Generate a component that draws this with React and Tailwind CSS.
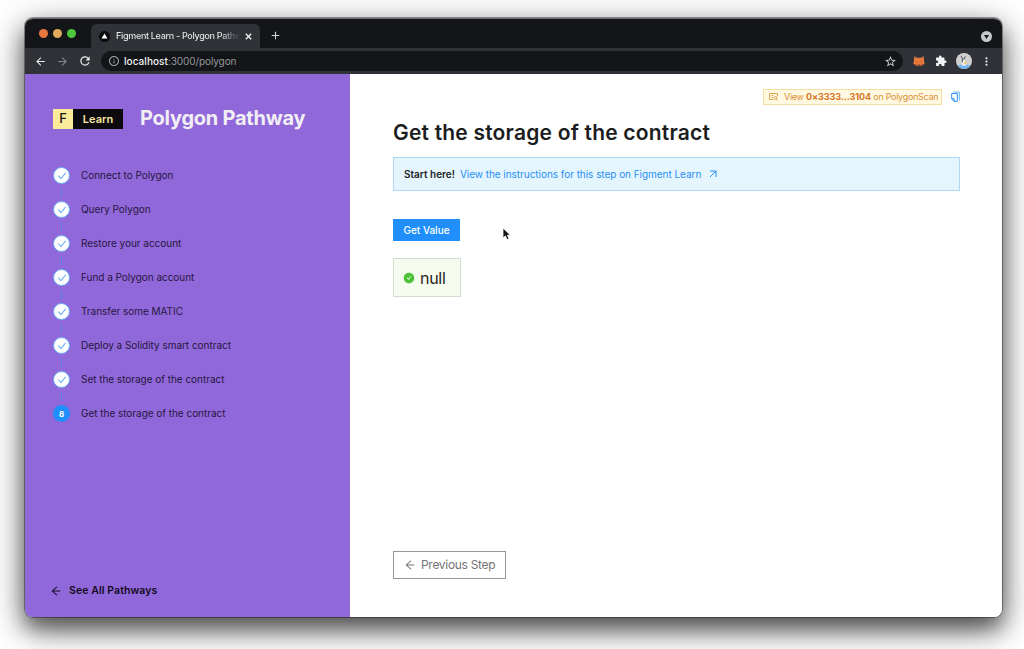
import React from "react";
import { AiOutlineArrowLeft, AiOutlineCheck, AiFillCheckCircle } from "react-icons/ai";
import { MdExtension, MdStarBorder, MdMoreVert, MdRefresh, MdInfoOutline, MdArrowBack, MdArrowForward, MdAdd } from "react-icons/md";

const STEPS = [
  "Connect to Polygon",
  "Query Polygon",
  "Restore your account",
  "Fund a Polygon account",
  "Transfer some MATIC",
  "Deploy a Solidity smart contract",
  "Set the storage of the contract",
  "Get the storage of the contract",
];

function FoxIcon() {
  return (
    <svg width="12" height="12" viewBox="0 0 12 12">
      <path d="M1.200 1.200 4.300 2.700h3.400l3.100-1.500.2 4.300.6 3.300-1 .7H9L8 10.800H4l-1-1.300H1.400l-1-.7L1 5.500Z" fill="#e8783a" />
      <path d="M1 1.100 4.300 2.700 2 3ZM11 1.100 7.700 2.700 10 3Z" fill="#8a6350" />
      <path d="M3.200 6.600l1.300.2v.7ZM8.800 6.600l-1.300.2v.7Z" fill="#6b3b28" />
      <path d="M1.600 9.500h1.600l.7 1.200H2.200ZM10.400 9.500H8.800l-.7 1.200h1.700Z" fill="#a9583a" />
      <path d="M4.900 9.600h2.200l.2.900H4.700Z" fill="#5a3a2e" />
    </svg>
  );
}

function Avatar() {
  return (
    <svg width="16" height="16" viewBox="0 0 16 16">
      <circle cx="8" cy="8" r="8" fill="#d0d1cf" />
      <path d="M1.400 12.500Q8 10.500 14.600 12.500A8 8 0 0 1 1.400 12.500Z" fill="#75b5ee" />
      <path d="M6.300 5.500h2.200l.6 2.500 1.500 2.500-.6 2.200H6.200Z" fill="#eeeeec" />
      <path d="M5 2.800 6.300 5.500 6.500 9M9.300 3.300 8.300 6 6.500 6" fill="none" stroke="#4d5054" strokeWidth="1" />
      <circle cx="9.300" cy="10" r="1.300" fill="#e2c666" />
    </svg>
  );
}

function BrowserTabs() {
  return (
    <div className="flex h-[29px] bg-[#131519] pl-[14px] pr-[10px]">
      <div className="flex h-[29px] w-[52px] items-center gap-[5px]">
        <span className="h-[9px] w-[9px] rounded-full bg-[#e9763e]" />
        <span className="h-[9px] w-[9px] rounded-full bg-[#e0ab5b]" />
        <span className="h-[9px] w-[9px] rounded-full bg-[#4fc63d]" />
      </div>
      <div className="mt-[5px] flex h-6 w-[169px] items-center rounded-t-[6px] bg-[#303238] pl-2 pr-[6px]">
        <svg className="shrink-0" width="11" height="11" viewBox="0 0 11 11">
          <circle cx="5.500" cy="5.500" r="5.500" fill="#090a0c" />
          <path d="m5.500 2.500 3 5h-6Z" fill="#fff" />
        </svg>
        <div className="ml-[6px] w-[124px] whitespace-nowrap bg-linear-to-r from-[#eceef0] from-85% to-[#303238] bg-clip-text text-[9px] font-medium leading-[14px] tracking-[-0.31px] text-transparent">
          Figment Learn - Polygon Pathw
        </div>
        <svg className="ml-[5px] shrink-0" width="7" height="7" viewBox="0 0 7 7" stroke="#f0f1f2" strokeWidth="1.300"><path d="m.8.8 5.400 5.400M6.200.8.8 6.200" /></svg>
      </div>
      <MdAdd className="ml-[9px] mt-[10px] text-[13px] text-[#d5d6d8]" />
      <span className="ml-auto mt-[12px] flex h-[11px] w-[11px] items-center justify-center rounded-full bg-[#c5c6c8]">
        <svg width="5" height="4" viewBox="0 0 5 4"><path d="M0 0h5L2.500 4Z" fill="#131519" /></svg>
      </span>
    </div>
  );
}

function Toolbar() {
  return (
    <div className="flex h-[26px] items-center bg-[#303238] pl-[9px] pr-[9px] text-[#e5e6e8]">
      <MdArrowBack className="text-[13px]" />
      <MdArrowForward className="ml-[9px] text-[13px] text-[#85878c]" />
      <MdRefresh className="ml-[9px] text-[14px]" />
      <div className="ml-[9px] flex h-5 w-[802px] items-center rounded-full bg-[#131519] pl-[7px] pr-[6px]">
        <MdInfoOutline className="text-[12px] text-[#a3a4a7]" />
        <div className="ml-[4px] whitespace-nowrap text-[10px] leading-[14px] tracking-[-0.09px] text-[#96989b]">
          <span className="font-medium tracking-[0.050px] text-[#f0f1f2]">localhost</span>:3000/polygon
        </div>
        <MdStarBorder className="ml-auto text-[13px] text-[#d4d5d7]" />
      </div>
      <div className="ml-[10px]"><FoxIcon /></div>
      <MdExtension className="ml-[10px] text-[12px] text-[#f2f3f4]" />
      <div className="ml-[9px]"><Avatar /></div>
      <MdMoreVert className="ml-[8px] shrink-0 text-[13px]" />
    </div>
  );
}

function Sidebar() {
  return (
    <aside className="flex w-[325px] shrink-0 flex-col bg-[#9168da] pb-[18px] pl-7">
      <div className="mt-[31px] flex h-7 items-center">
        <span className="flex h-5 w-5 items-center justify-center bg-[#fceb9b] text-[13px] font-medium text-[#17130f]">F</span>
        <span className="flex h-5 w-[50px] items-center justify-center bg-[#0c0a0d] text-[11px] font-semibold text-[#f8e5a3]">Learn</span>
        <h1 className="-mt-[2px] ml-[17px] whitespace-nowrap text-[20px] font-bold leading-7 tracking-[-0.24px] text-[#f2eff4]">Polygon Pathway</h1>
      </div>
      <ol className="mt-[34px]">
        {STEPS.map((step, i) => (
          <li key={step} className="flex h-[34px] items-start">
            <span className="flex h-[34px] w-[17px] flex-col items-center">
              {i < 7 ? (
                <span className="flex h-[17px] w-[17px] shrink-0 items-center justify-center rounded-full border border-[#65a8f3] bg-white">
                  <AiOutlineCheck className="text-[10px] text-[#3798f6]" />
                </span>
              ) : (
                <span className="flex h-[17px] w-[17px] shrink-0 items-center justify-center rounded-full bg-[#208ffb] text-[8px] font-bold text-white">8</span>
              )}
              {i < 7 && <span className="mt-[4px] h-[9px] w-px bg-[#5d84f2]" />}
            </span>
            <span className="ml-[11px] whitespace-nowrap text-[10px] leading-[17px] tracking-[-0.03px] text-[#26173e]">{step}</span>
          </li>
        ))}
      </ol>
      <a className="mt-auto flex items-center text-[#130b20]">
        <AiOutlineArrowLeft className="-ml-[3px] text-[12px]" />
        <span className="ml-[7px] text-[10.500px] font-semibold leading-4 tracking-[0.08px]">See All Pathways</span>
      </a>
    </aside>
  );
}

function Content() {
  return (
    <main className="flex min-w-0 flex-1 flex-col items-start bg-white pb-[38px] pl-[43px] pr-[42px]">
      <div className="mt-[15px] flex h-4 items-center self-end">
        <div className="flex h-4 w-[179px] items-center border border-[#f5dfa0] bg-[#fff9e1] pl-[5px]">
          <svg className="shrink-0" width="9" height="8" viewBox="0 0 9 8" fill="none" stroke="#d99a42" strokeWidth=".9">
            <path d="M4.500 6.500H.5V.5h8V3M2.300 2.500h2M2.300 4.300h1.500" />
            <circle cx="6.500" cy="4.900" r="1.400" /><path d="m7.500 6 1.200 1.500" />
          </svg>
          <span className="ml-[6px] whitespace-nowrap text-[9px] leading-[14px] tracking-[-0.3px] text-[#dc9038]">
            View <b className="font-bold tracking-[-0.050px] text-[#d97525]">0×3333...3104</b> on PolygonScan
          </span>
        </div>
        <svg className="-mt-[1px] ml-[9px]" width="9" height="11" viewBox="0 0 9 11" fill="none">
          <path d="M2.500 1h5.800v8.500" stroke="#65b1fa" />
          <path d="M.7 2.500h5.600v7.800H3L.7 8Z" stroke="#278ff5" />
          <path d="M.7 7.700H3.200v2.500" stroke="#278ff5" />
        </svg>
      </div>
      <h2 className="mt-[14px] whitespace-nowrap text-[21px] font-semibold leading-7 tracking-[0.2px] text-[#1c1d20]">Get the storage of the contract</h2>
      <div className="mt-[10px] flex h-[34px] w-[567px] items-center whitespace-nowrap border border-[#add9f8] bg-[#e5f5fe] pl-[10px] text-[10px] leading-4">
        <span className="font-semibold text-[#1c1d20]">Start here!</span>
        <a className="ml-[5px] flex items-center text-[#268ff7]">
          <span className="tracking-[-0.040px]">View the instructions for this step on Figment Learn</span>
          <svg className="ml-[8px]" width="8" height="8" viewBox="0 0 8 8" fill="none" stroke="currentColor"><path d="M1 1h6v6M7 1 1 7" /></svg>
        </a>
      </div>
      <button className="mt-[28px] h-[22px] w-[67px] bg-[#208ffb] text-[10px] font-medium leading-4 text-white">Get Value</button>
      <div className="mt-[17px] flex h-[39px] w-[68px] items-center border border-[#d4dcce] bg-[#f5fbef] pl-[9px]">
        <AiFillCheckCircle className="shrink-0 text-[12px] text-[#4ac233]" />
        <span className="ml-[5px] text-[16px] leading-5 tracking-[-0.300px] text-[#252723]">null</span>
      </div>
      <button className="mt-auto flex h-7 w-[113px] items-center border border-[#979797] pl-[10px] text-[#747474]">
        <AiOutlineArrowLeft className="shrink-0 text-[12px]" />
        <span className="ml-[5px] whitespace-nowrap text-[12px] leading-4 tracking-[-0.3px]">Previous Step</span>
      </button>
    </main>
  );
}

export default function App() {
  return (
    <div className="relative h-[649px] w-[1024px] overflow-hidden bg-white px-[25px] pt-[18px] font-['Inter',sans-serif]">
      <div className="flex h-[599px] w-[977px] flex-col overflow-hidden rounded-[8px] border-t border-[#69696b] bg-white shadow-[0_0_0_1px_rgba(0,0,0,0.35),0_12px_20px_rgba(0,0,0,0.45),0_10px_36px_rgba(0,0,0,0.5)]">
        <BrowserTabs />
        <Toolbar />
        <div className="flex flex-1">
          <Sidebar />
          <Content />
        </div>
      </div>
      <svg className="absolute left-[502px] top-[227px]" width="9" height="14" viewBox="0 0 9 14">
        <path d="M1 1v10l2.400-2.100L5 12.600l2-.8-1.600-3.600h3Z" fill="#171717" stroke="#fff" strokeWidth=".8" />
      </svg>
    </div>
  );
}
